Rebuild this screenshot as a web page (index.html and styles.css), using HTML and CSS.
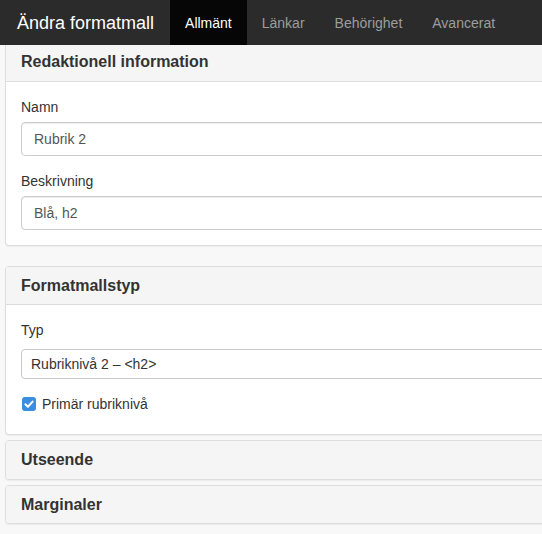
FILE: index.html
```html
<!DOCTYPE html>
<html lang="sv">
<head>
<meta charset="utf-8">
<title>Ändra formatmall</title>
<link rel="stylesheet" href="styles.css">
</head>
<body>
<nav class="navbar">
  <div class="brand">Ändra formatmall</div>
  <ul class="tabs">
    <li class="tab active">Allmänt</li>
    <li class="tab">Länkar</li>
    <li class="tab">Behörighet</li>
    <li class="tab">Avancerat</li>
  </ul>
</nav>
<main class="content">
  <section class="panel panel-first">
    <div class="panel-heading"><h3 class="panel-title">Redaktionell information</h3></div>
    <div class="panel-body">
      <div class="form-group">
        <label class="label">Namn</label>
        <div class="input">Rubrik 2</div>
      </div>
      <div class="form-group last">
        <label class="label">Beskrivning</label>
        <div class="input">Blå, h2</div>
      </div>
    </div>
  </section>
  <section class="panel panel-gap">
    <div class="panel-heading"><h3 class="panel-title">Formatmallstyp</h3></div>
    <div class="panel-body">
      <div class="form-group">
        <label class="label">Typ</label>
        <div class="select">Rubriknivå 2 – &lt;h2&gt;</div>
      </div>
      <div class="checkbox">
        <svg class="check" width="14" height="14" viewBox="0 0 14 14" aria-hidden="true">
          <rect x="0" y="0" width="14" height="14" rx="3" fill="#3a8de0"/>
          <path d="M3.4 7.3 L5.9 9.7 L10.6 4.6" fill="none" stroke="#fff" stroke-width="2" stroke-linecap="round" stroke-linejoin="round"/>
        </svg>
        <span class="check-label">Primär rubriknivå</span>
      </div>
    </div>
  </section>
  <section class="panel collapsed">
    <div class="panel-heading"><h3 class="panel-title">Utseende</h3></div>
  </section>
  <section class="panel collapsed">
    <div class="panel-heading"><h3 class="panel-title">Marginaler</h3></div>
  </section>
</main>
</body>
</html>
```

FILE: styles.css
```css
html, body {
  margin: 0;
  padding: 0;
}
body {
  background: #f8f8f8;
  font-family: "Liberation Sans", Arial, Helvetica, sans-serif;
  font-size: 14px;
  line-height: 20px;
  color: #333;
  overflow: hidden;
  width: 542px;
  height: 534px;
}
.navbar {
  display: flex;
  align-items: stretch;
  height: 45px;
  background: #2b2b2b;
  padding-left: 2px;
}
.brand {
  display: flex;
  align-items: center;
  padding: 0 16px 0 15px;
  font-size: 18px;
  color: #fff;
  white-space: nowrap;
}
.tabs {
  display: flex;
  list-style: none;
  margin: 0;
  padding: 0;
}
.tab {
  display: flex;
  align-items: center;
  padding: 0 15px;
  font-size: 14px;
  color: #9d9d9d;
  white-space: nowrap;
}
.tab.active {
  background: #060606;
  color: #fff;
}
.content {
  padding-left: 5px;
  overflow: hidden;
}
.panel {
  background: #fff;
  border: 1px solid #ddd;
  border-radius: 4px;
  box-shadow: 0 1px 1px rgba(0, 0, 0, 0.05);
  margin-bottom: 5px;
  margin-right: -60px;
}
.panel-first {
  border-top: 0;
  border-top-left-radius: 0;
  border-top-right-radius: 0;
  margin-bottom: 20px;
}
.panel-heading {
  background: #f5f5f5;
  border-bottom: 1px solid #ddd;
  padding: 10px 15px;
  border-top-left-radius: 3px;
  border-top-right-radius: 3px;
}
.panel-first .panel-heading {
  padding-top: 8px;
  border-radius: 0;
}
.collapsed .panel-heading {
  border-bottom: 0;
  border-radius: 3px;
}
.panel-title {
  margin: 0;
  font-size: 16px;
  line-height: 1.1;
  font-weight: bold;
  color: #333;
}
.panel-body {
  padding: 15px;
}
.form-group {
  margin-bottom: 15px;
}
.form-group.last {
  margin-bottom: 0;
}
.label {
  display: block;
  margin-bottom: 5px;
  font-weight: normal;
  color: #333;
}
.input {
  box-sizing: border-box;
  height: 34px;
  padding: 6px 12px;
  border: 1px solid #ccc;
  border-radius: 4px;
  background: #fff;
  box-shadow: inset 0 1px 1px rgba(0, 0, 0, 0.075);
  color: #555;
}
.select {
  box-sizing: border-box;
  height: 30px;
  margin-top: 9px;
  padding: 4px 9px;
  border: 1px solid #c8c8c8;
  border-radius: 4px;
  background: #fff;
  color: #333;
}
.checkbox {
  display: flex;
  align-items: center;
  height: 20px;
  margin-bottom: 5px;
  padding-left: 1px;
}
.check {
  flex: none;
  margin-right: 6px;
}
.check-label {
  color: #333;
}
```
